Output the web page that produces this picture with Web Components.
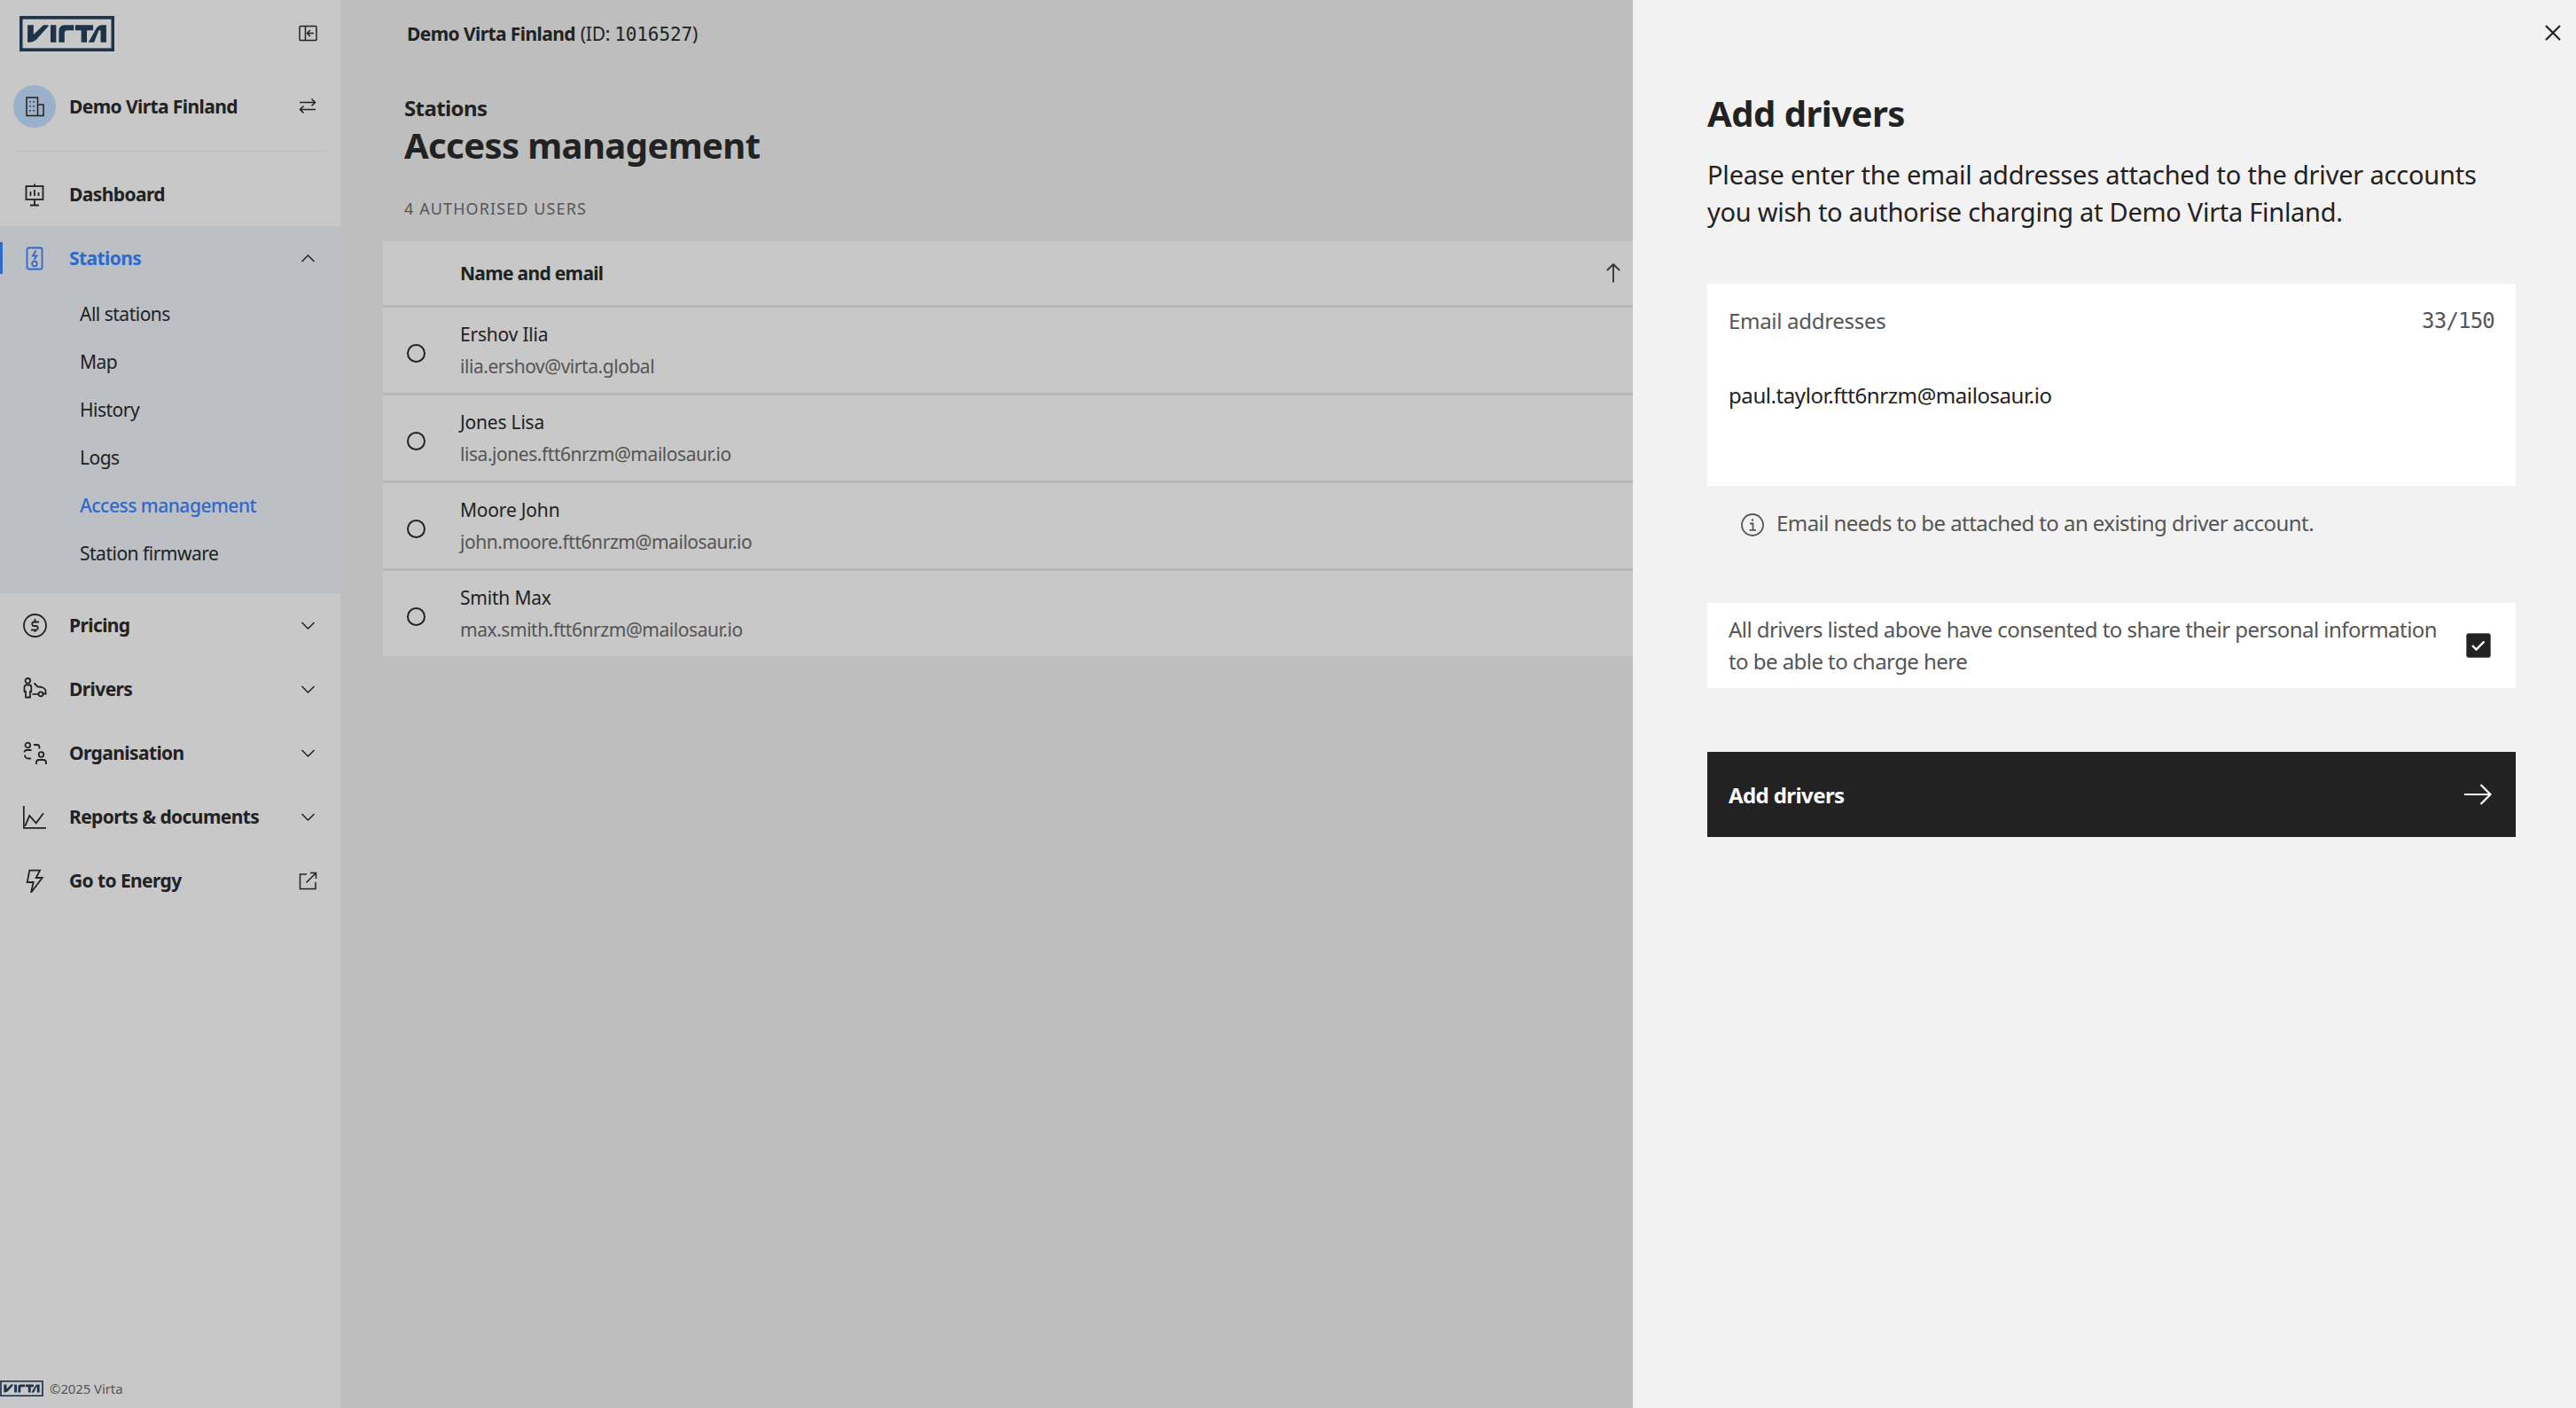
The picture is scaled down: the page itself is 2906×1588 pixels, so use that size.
<!DOCTYPE html>
<html lang="en">
<head>
<meta charset="utf-8">
<title>Access management</title>
<style>
  html, body { margin: 0; padding: 0; height: 100%; }
  body {
    font-family: "Noto Sans", "Open Sans", sans-serif;
    font-size: 21px;
    color: #222;
    overflow: hidden;
  }
</style>
</head>
<body>

<app-shell>
  <side-bar slot="side">
    <org-switch>Demo Virta Finland</org-switch>
    <nav-item icon="dashboard">Dashboard</nav-item>
    <nav-group>
      <nav-item icon="station" end="chev-up" active>Stations</nav-item>
      <sub-item>All stations</sub-item>
      <sub-item>Map</sub-item>
      <sub-item>History</sub-item>
      <sub-item>Logs</sub-item>
      <sub-item active>Access management</sub-item>
      <sub-item>Station firmware</sub-item>
    </nav-group>
    <nav-item icon="dollar" end="chev-down">Pricing</nav-item>
    <nav-item icon="driver" end="chev-down">Drivers</nav-item>
    <nav-item icon="org" end="chev-down">Organisation</nav-item>
    <nav-item icon="chart" end="chev-down">Reports &amp; documents</nav-item>
    <nav-item icon="bolt" end="launch">Go to Energy</nav-item>
  </side-bar>

  <page-main slot="main">
    <users-table>
      <user-row name="Ershov Ilia" email="ilia.ershov@virta.global"></user-row>
      <user-row name="Jones Lisa" email="lisa.jones.ftt6nrzm@mailosaur.io"></user-row>
      <user-row name="Moore John" email="john.moore.ftt6nrzm@mailosaur.io"></user-row>
      <user-row name="Smith Max" email="max.smith.ftt6nrzm@mailosaur.io"></user-row>
    </users-table>
  </page-main>

  <drawer-panel slot="drawer">
    <email-field></email-field>
    <info-note>Email needs to be attached to an existing driver account.</info-note>
    <consent-box>All drivers listed above have consented to share their personal information<br>to be able to charge here</consent-box>
    <primary-button>Add drivers</primary-button>
  </drawer-panel>
</app-shell>

<script>
const ICONS = {
  collapse: [21, '<rect x="1" y="2.500" width="19" height="16" rx="1"/><path d="M7.500 2.500v16M17 10.500H10M13 7l-3.500 3.500L13 14"/>'],
  swap: [21, '<path d="M1 6.500h17.500M14.500 2.500l4 4-4 4"/><path d="M19 14.500H1.500M5.500 10.500l-4 4 4 4"/>'],
  'chev-down': [21, '<path d="M3.500 7l7 7 7-7"/>'],
  'chev-up': [21, '<path d="M3.500 14l7-7 7 7"/>'],
  launch: [21, '<path d="M9 3H1.500v16.500H19V12M8.500 12.500L19.500 1.500M13 1.500h6.500V8"/>'],
  dashboard: [27, '<rect x="3.500" y="4" width="19" height="15"/><path d="M13 1.500V4M13 19v6M8 25.500h10M8.500 10v5M13 8v7M17.500 11v4"/>'],
  station: [27, '<rect x="4.500" y="1.500" width="17" height="24" rx="2"/><path d="M14.500 4.500l-3.500 6h4.500l-3 4.500"/><circle cx="13" cy="19.500" r="2.800"/>'],
  dollar: [27, '<circle cx="13.500" cy="13.500" r="12.500"/><path d="M18 9.500h-6a2.300 2.300 0 0 0 0 4.500h3a2.300 2.300 0 0 1 0 4.500H9M13.500 6v3.500M13.500 18.500V21"/>'],
  driver: [27, '<circle cx="5.300" cy="3.800" r="2.800"/><path d="M1.500 16v-5A2.500 2.500 0 0 1 4 8.500h2.800A2.500 2.500 0 0 1 9.300 11v5H8v6.500H3V16zM12.500 6.500l4 4c4.500 0 9 1.500 9 5v3h-3M10.500 18.800h7"/><circle cx="20" cy="18.800" r="2.500"/>'],
  org: [27, '<circle cx="5.300" cy="4.500" r="2.800"/><path d="M9.500 10H4A2.500 2.500 0 0 0 1.500 12.500M2 15.500A4 4 0 0 0 6 19.500h3M12 4h3.500a3 3 0 0 1 3 3v1.500"/><circle cx="20.500" cy="15" r="2.800"/><path d="M15 26v-2a3 3 0 0 1 3-3h5a3 3 0 0 1 3 3v2"/>'],
  chart: [27, '<path d="M.800 1v24.800H26M2.300 23.700L7.300 12l7.400 8.300L23 9.300"/>'],
  bolt: [27, '<path d="M7.300 1.700H19L14.700 10h7L9 26.700 11.700 15h-7z"/>']
};

const iconTpl = (name, size, colour) => {
  const [box, body] = ICONS[name];
  const weight = box === 21 ? 1.5 : 1.8;
  return `<svg width="${size || box}" height="${size || box}" viewBox="0 0 ${box} ${box}" fill="none" stroke="${colour || '#222'}" stroke-width="${weight}" style="display:block;flex:none">${body}</svg>`;
};

class VirtaLogo extends HTMLElement {
  constructor() {
    super();
    this.attachShadow({mode: 'open'});
    this.shadowRoot.innerHTML = `
      <style>
        :host { display: block; line-height: 0; }
        svg { width: 100%; height: 100%; display: block; }
      </style>
      <svg viewBox="68 55 318 118" fill="#1f3349">
        <rect x="73" y="60" width="308" height="108" fill="none" stroke="#1f3349" stroke-width="11"/>
        <path d="M95 85h20v32l33-32h17v4l-33 36q-10 18-37 18z"/>
        <path d="M172 85h19v58h-19z"/>
        <path d="M200 143v-38q0-20 20-20h30v18h-22q-9 0-9 9v31z"/>
        <path d="M255 85h60v18h-21v40h-19v-40h-20z"/>
        <path d="M299 143l26-46q7-12 20-12h14v58h-19v-40h-6l-16 40z"/>
      </svg>`;
  }
}
customElements.define('virta-logo', VirtaLogo);

class AppShell extends HTMLElement {
  constructor() {
    super();
    this.attachShadow({mode: 'open'});
    this.shadowRoot.innerHTML = `
      <style>
        :host { display: flex; width: 2906px; height: 1588px; overflow: hidden; }
      </style>
      <slot name="side"></slot>
      <slot name="main"></slot>
      <slot name="drawer"></slot>`;
  }
}
customElements.define('app-shell', AppShell);

class SideBar extends HTMLElement {
  constructor() {
    super();
    this.attachShadow({mode: 'open'});
    this.shadowRoot.innerHTML = `
      <style>
        :host {
          display: flex;
          flex-direction: column;
          flex: none;
          width: 384px;
          height: 1588px;
          background: #c8c8c8;
        }
        .top {
          height: 75px;
          flex: none;
          display: flex;
          align-items: center;
          justify-content: space-between;
          padding: 0 26px 0 22px;
        }
        .top virta-logo { width: 107px; height: 40px; }
        .foot {
          margin-top: auto;
          height: 44px;
          flex: none;
          display: flex;
          align-items: center;
          gap: 7px;
          font-size: 15px;
          color: #555;
        }
        .foot virta-logo { width: 49px; height: 18px; }
        .foot span { letter-spacing: -.1px; }
      </style>
      <div class="top">
        <virta-logo></virta-logo>
        ${iconTpl('collapse')}
      </div>
      <slot></slot>
      <div class="foot"><virta-logo></virta-logo><span>©2025 Virta</span></div>`;
  }
}
customElements.define('side-bar', SideBar);

class OrgSwitch extends HTMLElement {
  constructor() {
    super();
    this.attachShadow({mode: 'open'});
    this.shadowRoot.innerHTML = `
      <style>
        :host { display: block; margin: 0 18px 12px; border-bottom: 1px solid #bbb; }
        .row { display: flex; align-items: center; height: 95px; padding: 0 8px 6px 0; box-sizing: border-box; margin-left: -3px; }
        .avatar {
          width: 48px; height: 48px; border-radius: 50%;
          background: #9bb0ca; flex: none;
          display: flex; align-items: center; justify-content: center;
        }
        .name { font-weight: 700; margin-left: 15px; flex: 1; letter-spacing: -.6px; }
      </style>
      <div class="row">
        <div class="avatar">
          <svg width="24" height="24" viewBox="0 0 24 24" fill="none" stroke="#222" stroke-width="1.500">
            <path d="M3 22.500V2h12.500v20.500zM15.500 10H22v12.500h-6.500"/>
            <path d="M7 6v1.500M11 6v1.500M7 11v1.500M11 11v1.500M7 16v1.500M11 16v1.500"/>
          </svg>
        </div>
        <div class="name"><slot></slot></div>
        ${iconTpl('swap')}
      </div>`;
  }
}
customElements.define('org-switch', OrgSwitch);

class NavItem extends HTMLElement {
  constructor() {
    super();
    this.attachShadow({mode: 'open'});
    const active = this.hasAttribute('active');
    const colour = active ? '#3069cc' : '#222';
    const end = this.getAttribute('end');
    this.shadowRoot.innerHTML = `
      <style>
        :host { display: block; }
        .row {
          position: relative;
          height: 72px;
          display: flex;
          align-items: center;
          padding: 0 26px;
          font-weight: 700;
          letter-spacing: -.6px;
          color: ${colour};
        }
        .label { flex: 1; margin-left: 25px; }
        .bar { position: absolute; left: 0; top: 18px; width: 3px; height: 36px; background: #3069cc; }
      </style>
      <div class="row">
        ${active ? '<div class="bar"></div>' : ''}
        ${iconTpl(this.getAttribute('icon'), 27, colour)}
        <div class="label"><slot></slot></div>
        ${end ? iconTpl(end) : ''}
      </div>`;
  }
}
customElements.define('nav-item', NavItem);

class NavGroup extends HTMLElement {
  constructor() {
    super();
    this.attachShadow({mode: 'open'});
    this.shadowRoot.innerHTML = `
      <style>
        :host { display: block; background: #bcbfc4; padding-bottom: 18px; }
      </style>
      <slot></slot>`;
  }
}
customElements.define('nav-group', NavGroup);

class SubItem extends HTMLElement {
  constructor() {
    super();
    this.attachShadow({mode: 'open'});
    const active = this.hasAttribute('active');
    this.shadowRoot.innerHTML = `
      <style>
        :host {
          display: flex;
          align-items: center;
          height: 54px;
          padding-left: 90px;
          letter-spacing: -.5px;
          color: ${active ? '#3069cc' : '#222'};
          font-weight: ${active ? 500 : 400};
        }
      </style>
      <slot></slot>`;
  }
}
customElements.define('sub-item', SubItem);

class PageMain extends HTMLElement {
  constructor() {
    super();
    this.attachShadow({mode: 'open'});
    this.shadowRoot.innerHTML = `
      <style>
        :host {
          display: block;
          flex: 1;
          min-width: 0;
          height: 1588px;
          background: #bebebe;
          padding-left: 48px;
          box-sizing: border-box;
        }
        .crumb { height: 76px; display: flex; align-items: center; padding-left: 27px; letter-spacing: -.3px; }
        .crumb b { font-weight: 700; margin-right: 6px; letter-spacing: -.6px; }
        .crumb .id { font-family: "DejaVu Sans Mono", monospace; font-size: 21px; letter-spacing: -.1px; }
        .head { padding: 31px 0 0 24px; }
        .section { font-size: 24px; line-height: 30px; font-weight: 700; letter-spacing: -.6px; }
        h1 { margin: 0; font-size: 40px; line-height: 54px; font-weight: 700; letter-spacing: -.6px; }
        .count { margin-top: 31px; font-size: 18px; line-height: 27px; color: #555; letter-spacing: 1.100px; }
        .body { margin-top: 23px; }
      </style>
      <div class="crumb"><b>Demo Virta Finland</b><span>(ID: <span class="id">1016527</span>)</span></div>
      <div class="head">
        <div class="section">Stations</div>
        <h1>Access management</h1>
        <div class="count">4 AUTHORISED USERS</div>
      </div>
      <div class="body"><slot></slot></div>`;
  }
}
customElements.define('page-main', PageMain);

class UsersTable extends HTMLElement {
  constructor() {
    super();
    this.attachShadow({mode: 'open'});
    this.shadowRoot.innerHTML = `
      <style>
        :host { display: block; }
        .head {
          height: 72px;
          background: #c8c8c8;
          display: flex;
          align-items: center;
          justify-content: space-between;
          padding: 0 12px 0 87px;
          font-weight: 700;
          letter-spacing: -.7px;
        }
        ::slotted(user-row) { border-top: 3px solid #b8b8b8; }
      </style>
      <div class="head">
        <span>Name and email</span>
        <svg width="20" height="24" viewBox="0 0 20 24" fill="none" stroke="#333" stroke-width="1.800"><path d="M10 22.500V2M2.800 9L10 2l7.200 7"/></svg>
      </div>
      <slot></slot>`;
  }
}
customElements.define('users-table', UsersTable);

class UserRow extends HTMLElement {
  constructor() {
    super();
    this.attachShadow({mode: 'open'});
    this.shadowRoot.innerHTML = `
      <style>
        :host { display: block; background: #c8c8c8; }
        .row { height: 96px; display: flex; align-items: center; }
        .radio {
          width: 21px; height: 21px; border-radius: 50%;
          border: 2px solid #222; box-sizing: border-box;
          margin: 6px 39px 0 27px; flex: none;
        }
        .name { line-height: 36px; letter-spacing: -.2px; }
        .email { line-height: 36px; color: #555; letter-spacing: -.45px; }
      </style>
      <div class="row">
        <div class="radio"></div>
        <div>
          <div class="name">${this.getAttribute('name')}</div>
          <div class="email">${this.getAttribute('email')}</div>
        </div>
      </div>`;
  }
}
customElements.define('user-row', UserRow);

class DrawerPanel extends HTMLElement {
  constructor() {
    super();
    this.attachShadow({mode: 'open'});
    this.shadowRoot.innerHTML = `
      <style>
        :host {
          display: flex;
          flex-direction: column;
          flex: none;
          width: 1064px;
          height: 1588px;
          box-sizing: border-box;
          background: #f2f2f2;
          padding: 0 17px 0 84px;
        }
        .close { height: 74px; display: flex; align-items: center; justify-content: flex-end; }
        .body { padding-right: 51px; }
        h2 { margin: 27px 0 0; font-size: 40px; line-height: 54px; font-weight: 700; letter-spacing: -.5px; }
        p { margin: 21px 0 60px; font-size: 29px; line-height: 42px; letter-spacing: -.2px; }
        p span { letter-spacing: -.28px; }
      </style>
      <div class="close">
        <svg width="18" height="18" viewBox="0 0 18 18" fill="none" stroke="#222" stroke-width="2.200"><path d="M1 1l16 16M17 1L1 17"/></svg>
      </div>
      <div class="body">
        <h2>Add drivers</h2>
        <p>Please enter the email addresses attached to the driver accounts<br><span>you wish to authorise charging at Demo Virta Finland.</span></p>
        <slot></slot>
      </div>`;
  }
}
customElements.define('drawer-panel', DrawerPanel);

class EmailField extends HTMLElement {
  constructor() {
    super();
    this.attachShadow({mode: 'open'});
    this.shadowRoot.innerHTML = `
      <style>
        :host {
          display: block;
          height: 228px;
          box-sizing: border-box;
          background: #fff;
          padding: 24px 24px 0;
          font-size: 24px;
          line-height: 36px;
        }
        .top { display: flex; justify-content: space-between; color: #555; letter-spacing: -.3px; }
        .top .n { font-family: "DejaVu Sans Mono", monospace; font-size: 24px; letter-spacing: -.8px; }
        .value { margin-top: 48px; color: #222; letter-spacing: -.42px; }
      </style>
      <div class="top"><span>Email addresses</span><span class="n">33/150</span></div>
      <div class="value">paul.taylor.ftt6nrzm@mailosaur.io</div>`;
  }
}
customElements.define('email-field', EmailField);

class InfoNote extends HTMLElement {
  constructor() {
    super();
    this.attachShadow({mode: 'open'});
    this.shadowRoot.innerHTML = `
      <style>
        :host {
          display: flex;
          align-items: center;
          gap: 14px;
          margin: 24px 0 72px;
          padding-left: 38px;
          font-size: 24px;
          line-height: 36px;
          color: #555;
          letter-spacing: -.56px;
        }
      </style>
      <svg width="26" height="26" viewBox="0 0 26 26" fill="none" stroke="#555" stroke-width="1.800" style="margin-top:4px;flex:none">
        <circle cx="13" cy="13" r="12"/>
        <path d="M10 11.500h3.500v7M9.500 18.800h7.500"/>
        <circle cx="13" cy="7.500" r="1.200" fill="#555" stroke="none"/>
      </svg>
      <slot></slot>`;
  }
}
customElements.define('info-note', InfoNote);

class ConsentBox extends HTMLElement {
  constructor() {
    super();
    this.attachShadow({mode: 'open'});
    this.shadowRoot.innerHTML = `
      <style>
        :host {
          display: flex;
          align-items: center;
          justify-content: space-between;
          height: 96px;
          box-sizing: border-box;
          background: #fff;
          padding: 0 28px 0 24px;
          font-size: 24px;
          line-height: 36px;
          color: #555;
          letter-spacing: -.55px;
        }
        .box {
          width: 28px; height: 28px; border-radius: 3px;
          background: #222; border: 1px solid #666; box-sizing: border-box;
          display: flex; align-items: center; justify-content: center; flex: none;
        }
      </style>
      <div><slot></slot></div>
      <div class="box">
        <svg width="18" height="14" viewBox="0 0 18 14" fill="none" stroke="#fff" stroke-width="2.400"><path d="M2 7l4.500 4.500L15.500 2.500"/></svg>
      </div>`;
  }
}
customElements.define('consent-box', ConsentBox);

class PrimaryButton extends HTMLElement {
  constructor() {
    super();
    this.attachShadow({mode: 'open'});
    this.shadowRoot.innerHTML = `
      <style>
        :host {
          display: flex;
          align-items: center;
          justify-content: space-between;
          height: 96px;
          margin-top: 72px;
          box-sizing: border-box;
          background: #222;
          color: #fff;
          padding: 0 27px 0 24px;
          font-size: 24px;
          font-weight: 700;
          letter-spacing: -.6px;
        }
      </style>
      <slot></slot>
      <svg width="31" height="24" viewBox="0 0 31 24" fill="none" stroke="#fff" stroke-width="2.200"><path d="M0 12h29M18.500 1l11 11-11 11"/></svg>`;
  }
}
customElements.define('primary-button', PrimaryButton);
</script>
</body>
</html>
